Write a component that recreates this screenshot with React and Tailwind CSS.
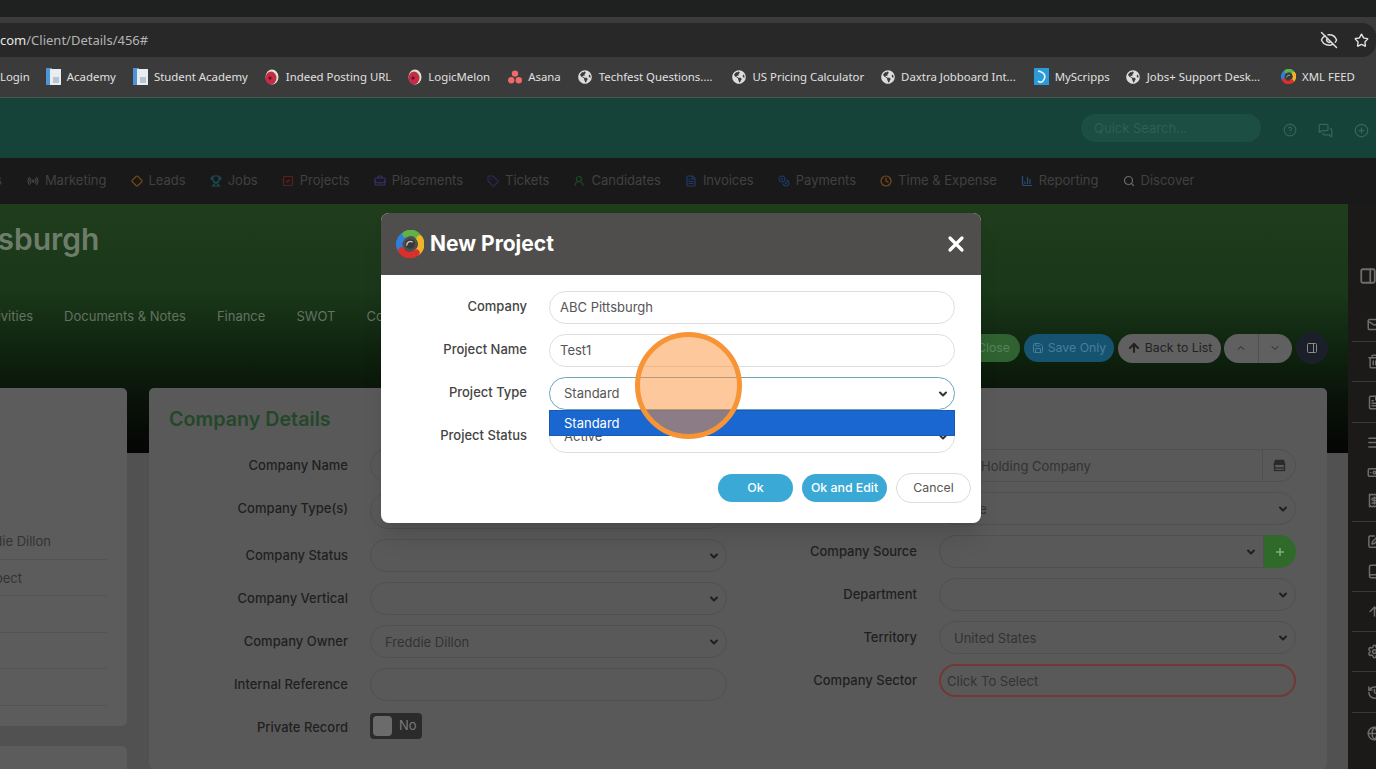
import {
  ArrowUp, BarChart3, Book, BriefcaseBusiness, ChevronDown, ChevronUp, CircleHelp, CirclePlus, Clock, Coins,
  Diamond, EyeOff, FileText, Globe, History, Mail, MessagesSquare, PanelRight, Plus, Radio, Receipt, Save,
  Search, AlignJustify, SquareCheck, SquarePen, Star, Tag, Trash2, Trophy, UserRound, Banknote, Settings,
} from "lucide-react";
import { FaGlobeAmericas } from "react-icons/fa";

const appFont = "font-['Inter','Liberation_Sans',sans-serif]";

// Four coloured arcs swirling round a small hub, used for the modal title and the last bookmark.
function Logo({ size = 26 }) {
  return (
    <svg width={size} height={size} viewBox="0 0 26 26" fill="none" strokeLinecap="round">
      <path d="M5 19 C1 14 3 7 9 4" stroke="#2f7fd8" strokeWidth="6" />
      <path d="M9 4 C14 1 19 3 22 8" stroke="#5fb246" strokeWidth="6" />
      <path d="M22 8 C25 13 23 19 19 21" stroke="#f0b429" strokeWidth="6" />
      <path d="M19 21 C14 25 8 24 5 19" stroke="#d9302c" strokeWidth="6" />
      <circle cx="13" cy="13" r="4.5" fill="#3a3836" />
      <path d="M10 14 C10 11 13 10 15 11" stroke="#c9c9c9" strokeWidth="1.3" />
    </svg>
  );
}

function DocIcon() {
  return (
    <svg width="15" height="17" viewBox="0 0 15 17">
      <rect x="0" y="0" width="6" height="17" fill="#4f94d4" />
      <rect x="4" y="1" width="11" height="16" fill="#e8edf2" />
      <rect x="7" y="9" width="6" height="6" fill="#b9c4cf" />
    </svg>
  );
}

function MelonIcon() {
  return (
    <svg width="14" height="17" viewBox="0 0 14 17">
      <ellipse cx="7" cy="9" rx="6.5" ry="7.5" fill="#d9e8c8" />
      <ellipse cx="6" cy="10" rx="5.5" ry="6.5" fill="#c32b48" />
      <circle cx="5" cy="10" r="1.5" fill="#5c1020" />
    </svg>
  );
}

function AsanaIcon() {
  return (
    <svg width="14" height="14" viewBox="0 0 14 14" fill="#ef6a6a">
      <circle cx="7" cy="3.6" r="3.2" />
      <circle cx="3.2" cy="10.2" r="3.2" />
      <circle cx="10.8" cy="10.2" r="3.2" />
    </svg>
  );
}

function ScrippsIcon() {
  return (
    <svg width="15" height="17" viewBox="0 0 15 17">
      <rect width="15" height="17" fill="#2b9ad8" />
      <path d="M4 3 C10 4 13 8 9 13 C7 15 5 14 4 13" stroke="#e8f6ff" strokeWidth="1.6" fill="none" />
    </svg>
  );
}

// Small building glyph on the holding company lookup.
function LookupIcon() {
  return (
    <svg width="13" height="13" viewBox="0 0 13 13" fill="none" stroke="#2a2a2a" strokeWidth="1.3">
      <path d="M2.5 1.5 H10.5 L11.5 5 H1.5 Z" fill="#2a2a2a" />
      <rect x="1.5" y="5" width="10" height="6.5" />
      <path d="M1 9 H12" />
    </svg>
  );
}

const globe = <FaGlobeAmericas size={14} className="text-[#dcdcdc]" />;

const bookmarks = [
  { label: "Academy", icon: <DocIcon />, ml: "ml-[16px]" },
  { label: "Student Academy", icon: <DocIcon />, ml: "ml-[17px]" },
  { label: "Indeed Posting URL", icon: <MelonIcon />, ml: "ml-[17px]" },
  { label: "LogicMelon", icon: <MelonIcon />, ml: "ml-[16px]" },
  { label: "Asana", icon: <AsanaIcon />, ml: "ml-[17px]" },
  { label: "Techfest Questions....", icon: globe, ml: "ml-[17px]" },
  { label: "US Pricing Calculator", icon: globe, ml: "ml-[19px]" },
  { label: "Daxtra Jobboard Int...", icon: globe, ml: "ml-[16px]" },
  { label: "MyScripps", icon: <ScrippsIcon />, ml: "ml-[18px]" },
  { label: "Jobs+ Support Desk...", icon: globe, ml: "ml-[16px]" },
  { label: "XML FEED", icon: <Logo size={15} />, ml: "ml-[21px]" },
];

const navItems = [
  { label: "Marketing", Icon: Radio, color: "text-[#444]" },
  { label: "Leads", Icon: Diamond, color: "text-[#7a4f14]" },
  { label: "Jobs", Icon: Trophy, color: "text-[#1c4e5c]" },
  { label: "Projects", Icon: SquareCheck, color: "text-[#5a1f1f]" },
  { label: "Placements", Icon: BriefcaseBusiness, color: "text-[#3a2f6a]" },
  { label: "Tickets", Icon: Tag, color: "text-[#2d2a5c]" },
  { label: "Candidates", Icon: UserRound, color: "text-[#1c4a22]" },
  { label: "Invoices", Icon: FileText, color: "text-[#1e3a6a]" },
  { label: "Payments", Icon: Coins, color: "text-[#1e3a6a]" },
  { label: "Time & Expense", Icon: Clock, color: "text-[#7a4a1a]" },
  { label: "Reporting", Icon: BarChart3, color: "text-[#2a4f7a]" },
  { label: "Discover", Icon: Search, color: "text-[#6a6a6a]" },
];

const sideGroups = [
  { h: "h-[98px]", items: [[PanelRight, "pt-[63px]", "ml-[7px]", 18]] },
  { h: "h-[40px]", center: true, items: [[Mail, "translate-y-[3px]"]] },
  { h: "h-[40px]", center: true, items: [[Trash2]] },
  { h: "h-[41px]", center: true, items: [[FileText]] },
  { h: "h-[99px]", items: [[AlignJustify, "pt-[12px]"], [Banknote, "pt-[15px]"], [Receipt, "pt-[13px]"]] },
  { h: "h-[70px]", items: [[SquarePen, "pt-[12px]"], [Book, "pt-[15px]"]] },
  { h: "h-[40px]", center: true, items: [[ArrowUp]] },
  { h: "h-[40px]", center: true, items: [[Settings]] },
  { h: "h-[41px]", center: true, items: [[History]] },
  { h: "h-[56px]", items: [[Globe, "pt-[13px]"]], last: true },
];

function Sidebar() {
  return (
    <div className="w-[28px] shrink-0 overflow-hidden bg-[#1c1a19] text-[#6d6d6d]">
      {sideGroups.map((group, i) => (
        <div key={i} className={`${group.h} ml-[4px] ${i > 0 && !group.last ? "border-b border-[#383838]" : ""} ${group.center ? "flex items-center" : ""}`}>
          {group.items.map(([Icon, pt = "", ml = "ml-[15px]", size = 15], j) => (
            <div key={j} className={`${pt} ${ml}`}>
              <Icon size={size} strokeWidth={2.4} className="shrink-0" />
            </div>
          ))}
        </div>
      ))}
    </div>
  );
}

function Field({
  value,
  select,
  width = "w-[357px]",
  h = "h-[33px]",
  tone = "text-[#333]",
  extra,
  pl = "pl-[14px]",
  border = "border border-[#505050]",
  shape = "rounded-full",
}) {
  return (
    <div className={`flex ${width} ${h} shrink-0 items-center ${shape} ${border} ${pl} pr-[4px] text-[13px] ${tone}`}>
      <span className="flex-1 translate-y-px truncate">{value}</span>
      {select && <ChevronDown size={12} strokeWidth={4} className="mr-[2px] text-[#1f1f1f]" />}
      {extra}
    </div>
  );
}

function FormRow({ label, children, mb = "mb-[10px]", nudge = "" }) {
  return (
    <div className={`flex min-h-[33px] items-center ${mb}`}>
      <div className={`mr-[22px] w-[179px] shrink-0 text-right text-[13px] font-medium text-[#1f1f1f] ${nudge}`}>{label}</div>
      {children}
    </div>
  );
}

function ModalRow({ label, children }) {
  return (
    <div className="mb-[10px] flex items-center">
      <div className="mr-[22px] w-[146px] shrink-0 -translate-y-[1px] text-right text-[13px] font-medium text-[#444]">{label}</div>
      {children}
    </div>
  );
}

function ModalInput({ value, select, focus }) {
  return (
    <div className={`flex h-[33px] w-[406px] items-center rounded-full border ${focus ? "border-[#6ea3bd]" : "border-[#dedede]"} ${select ? "pl-[14px]" : "pl-[10px]"} pr-[4px] text-[13px] text-[#555]`}>
      <span className="flex-1">{value}</span>
      {select && <ChevronDown size={12} strokeWidth={4} className="mr-[1px] text-[#333]" />}
    </div>
  );
}

export default function App() {
  return (
    <div className={`relative h-[769px] w-[1376px] overflow-hidden bg-[#515151] ${appFont}`}>
      {/* browser chrome */}
      <div className="h-[17px] bg-[#1f2020]" />
      <div className="h-[6px] bg-[#3b3b3b]" />
      <div className="bg-[#3b3b3b]">
        <div className="flex h-[34px] items-center rounded-r-[14px] bg-[#282828] pr-[7px] font-['Noto_Sans',sans-serif] text-[13px]">
          <span className="translate-y-px text-[#e6e6e6]">com</span>
          <span className="flex-1 translate-y-px text-[#b4b4b4]">/Client/Details/456#</span>
          <EyeOff size={18} className="text-[#dcdcdc]" />
          <Star size={15} strokeWidth={2.2} className="ml-[16px] text-[#e4e4e4]" />
        </div>
      </div>
      <div className="flex h-[41px] items-center whitespace-nowrap border-b border-[#4a5652] bg-[#3b3b3b] font-['Noto_Sans',sans-serif] text-[11.4px] text-[#e0e0e0]">
        <span>Login</span>
        {bookmarks.map((b) => (
          <div key={b.label} className={`flex items-center gap-[6px] ${b.ml}`}>
            <span className="flex w-[15px] justify-center">{b.icon}</span>
            <span>{b.label}</span>
          </div>
        ))}
      </div>

      {/* app top bar */}
      <div className="flex h-[60px] items-center justify-end bg-[#15433a] pr-[7px] text-[#35665a]">
        <div className="flex h-[28px] w-[180px] items-center rounded-full bg-[#1c4e44] pl-[13px] pt-[1px] text-[13px] text-[#30604f]">Quick Search...</div>
        <CircleHelp size={14} className="ml-[22px] translate-y-[2px]" />
        <MessagesSquare size={15} className="ml-[21px] translate-y-[2px]" />
        <CirclePlus size={15} className="ml-[21px] translate-y-[2px]" />
      </div>

      {/* main nav */}
      <div className="flex h-[46px] items-center whitespace-nowrap bg-[#191919] text-[13px] text-[#414141]">
        <span className="-ml-[5px] mr-[25px]">s</span>
        {navItems.map(({ label, Icon, color }) => (
          <div key={label} className="mr-[24px] flex items-center gap-[6px]">
            <Icon size={12} strokeWidth={2.4} className={color} />
            <span>{label}</span>
          </div>
        ))}
      </div>

      <div className="flex h-[565px]">
        <div className="min-w-0 flex-1">
          {/* hero */}
          <div className="h-[249px] overflow-hidden bg-[linear-gradient(to_bottom,#1f3d1b_0%,#1a381a_35%,#0e220e_60%,#081008_82%,#050505_100%)]">
            <div className="-ml-[121px] whitespace-nowrap pt-[17px] text-[30px] font-semibold leading-[36px] text-[#6e7d6b]">ABC Pittsburgh</div>
            <div className="flex items-start justify-between pr-[20px]">
              <div className="-ml-[23px] flex gap-[31px] whitespace-nowrap pt-[49px] text-[13px] leading-[20px] text-[#647260]">
                <span>Activities</span>
                <span>Documents &amp; Notes</span>
                <span>Finance</span>
                <span>SWOT</span>
                <span>Contacts</span>
              </div>
              <div className="flex items-center gap-[4px] pt-[75px] text-[12.3px]">
                <div className="flex h-[28px] w-[90px] items-center justify-end rounded-full bg-[#2f6230] pr-[10px] text-[#56835a]">Close</div>
                <div className="flex h-[28px] w-[90px] items-center justify-center gap-[4px] rounded-full bg-[#165370] text-[#477f99]">
                  <Save size={12} />
                  Save Only
                </div>
                <div className="flex h-[29px] w-[103px] items-center justify-center gap-[4px] rounded-full bg-[#606060] text-[#222]">
                  <ArrowUp size={14} strokeWidth={3.5} />
                  Back to List
                </div>
                <div className="-ml-[1px] flex h-[29px] w-[68px] items-center rounded-full bg-[#606060] text-[#2a2a2a]">
                  <div className="flex h-full flex-1 items-center justify-center border-r border-[#505050]">
                    <ChevronUp size={12} />
                  </div>
                  <div className="flex flex-1 justify-center">
                    <ChevronDown size={12} />
                  </div>
                </div>
                <div className="flex h-[32px] w-[32px] items-center justify-center rounded-full bg-[#1b1f2a] text-[#8a8a8a]">
                  <PanelRight size={12} />
                </div>
              </div>
            </div>
          </div>

          {/* cards over the hero */}
          <div className="-mt-[65px] flex gap-[22px] text-[#333]">
            <div className="w-[127px] shrink-0">
              <div className="h-[338px] rounded-r-[5px] bg-[#5c5c5c] pt-[135px] text-[13px]">
                <div className="mr-[20px] whitespace-nowrap">
                  <div className="flex h-[37px] items-center justify-end border-b border-[#535353] pr-[56px] pt-[2px]">Freddie Dillon</div>
                  <div className="flex h-[36px] items-center justify-end border-b border-[#535353] pr-[85px] pt-[2px]">Prospect</div>
                  <div className="h-[37px] border-b border-[#535353]" />
                  <div className="h-[36px] border-b border-[#535353]" />
                  <div className="h-[37px] border-b border-[#535353]" />
                </div>
              </div>
              <div className="mt-[20px] h-[40px] rounded-r-[5px] bg-[#5c5c5c]" />
            </div>

            <div className="h-[381px] w-[1178px] shrink-0 rounded-[5px] bg-[#595959] pl-[20px] pt-[17px]">
              <h2 className="h-[28px] text-[19.7px] font-semibold leading-[28px] text-[#24472a]">Company Details</h2>
              <div className="mt-[16px] flex">
                <div className="w-[569px] shrink-0">
                  <FormRow label="Company Name"><Field /></FormRow>
                  <FormRow label="Company Type(s)" nudge="-translate-y-[2px]"><Field h="h-[37px]" /></FormRow>
                  <FormRow label="Company Status"><Field select /></FormRow>
                  <FormRow label="Company Vertical"><Field select /></FormRow>
                  <FormRow label="Company Owner"><Field select value="Freddie Dillon" /></FormRow>
                  <FormRow label="Internal Reference"><Field /></FormRow>
                  <FormRow label="Private Record">
                    <div className="flex h-[26px] w-[52px] -translate-y-[2px] items-center rounded-[4px] bg-[#2b2b2b] pl-[3px] text-[13px] text-[#7a7a7a]">
                      <div className="h-[20px] w-[19px] rounded-[4px] bg-[#6b6b6b]" />
                      <span className="ml-[7px]">No</span>
                    </div>
                  </FormRow>
                </div>
                <div>
                  <FormRow>
                    <Field
                      value="Holding Company"
                      pl="pl-[41px]"
                      extra={
                        <div className="-my-px -mr-[4px] flex h-[33px] w-[33px] items-center justify-center border-l border-[#505050]">
                          <LookupIcon />
                        </div>
                      }
                    />
                  </FormRow>
                  <FormRow><Field select value="None" /></FormRow>
                  <FormRow label="Company Source">
                    <div className="flex w-[357px]">
                      <Field select width="w-[325px]" shape="rounded-l-full" />
                      <div className="flex h-[33px] w-[32px] items-center justify-center rounded-r-full bg-[#2f6a2b] text-[#7db079]">
                        <Plus size={12} strokeWidth={3} />
                      </div>
                    </div>
                  </FormRow>
                  <FormRow label="Department"><Field select /></FormRow>
                  <FormRow label="Territory"><Field select value="United States" /></FormRow>
                  <FormRow label="Company Sector">
                    <Field value="Click To Select" pl="pl-[6px]" border="border-2 border-[#733835]" />
                  </FormRow>
                </div>
              </div>
            </div>
          </div>
        </div>
        <Sidebar />
      </div>

      {/* New Project modal */}
      <div className="absolute left-[381px] top-[213px] w-[600px] overflow-hidden rounded-[8px] bg-white shadow-xl">
        <div className="flex h-[62px] items-center bg-[#4f4e4c] pl-[15px] pr-[15px] text-white">
          <Logo size={28} />
          <div className="ml-[6px] flex-1 text-[21px] font-bold">New Project</div>
          <svg width="20" height="20" viewBox="0 0 20 20" stroke="white" strokeWidth="3.2" strokeLinecap="round">
            <path d="M4 4 L16 16 M16 4 L4 16" />
          </svg>
        </div>
        <div className="relative pt-[16px]">
          <ModalRow label="Company"><ModalInput value="ABC Pittsburgh" /></ModalRow>
          <ModalRow label="Project Name"><ModalInput value="Test1" /></ModalRow>
          <ModalRow label="Project Type"><ModalInput value="Standard" select focus /></ModalRow>
          <ModalRow label="Project Status"><ModalInput value="Active" select /></ModalRow>
          <div className="absolute left-[168px] top-[135px] flex h-[26px] w-[406px] items-center border border-[#1a5ab0] bg-[#1a67d2] pl-[14px] pt-[1px] text-[13px] text-white">Standard</div>
          <div className="flex items-center justify-end gap-[9px] pr-[10px] pt-[10px] text-[12.3px]">
            <div className="flex h-[28px] w-[75px] items-center justify-center rounded-full bg-[#3aa9d6] font-medium text-white">Ok</div>
            <div className="flex h-[28px] w-[85px] items-center justify-center rounded-full bg-[#3aa9d6] font-medium text-white">Ok and Edit</div>
            <div className="flex h-[30px] w-[75px] items-center justify-center rounded-full border border-[#dcdcdc] text-[#555]">Cancel</div>
          </div>
          <div className="h-[20px]" />
        </div>
      </div>

      {/* click marker */}
      <div className="absolute left-[635px] top-[332px] h-[107px] w-[107px] rounded-full border-[5px] border-[#f79436] bg-[#fb9137]/50" />
    </div>
  );
}
